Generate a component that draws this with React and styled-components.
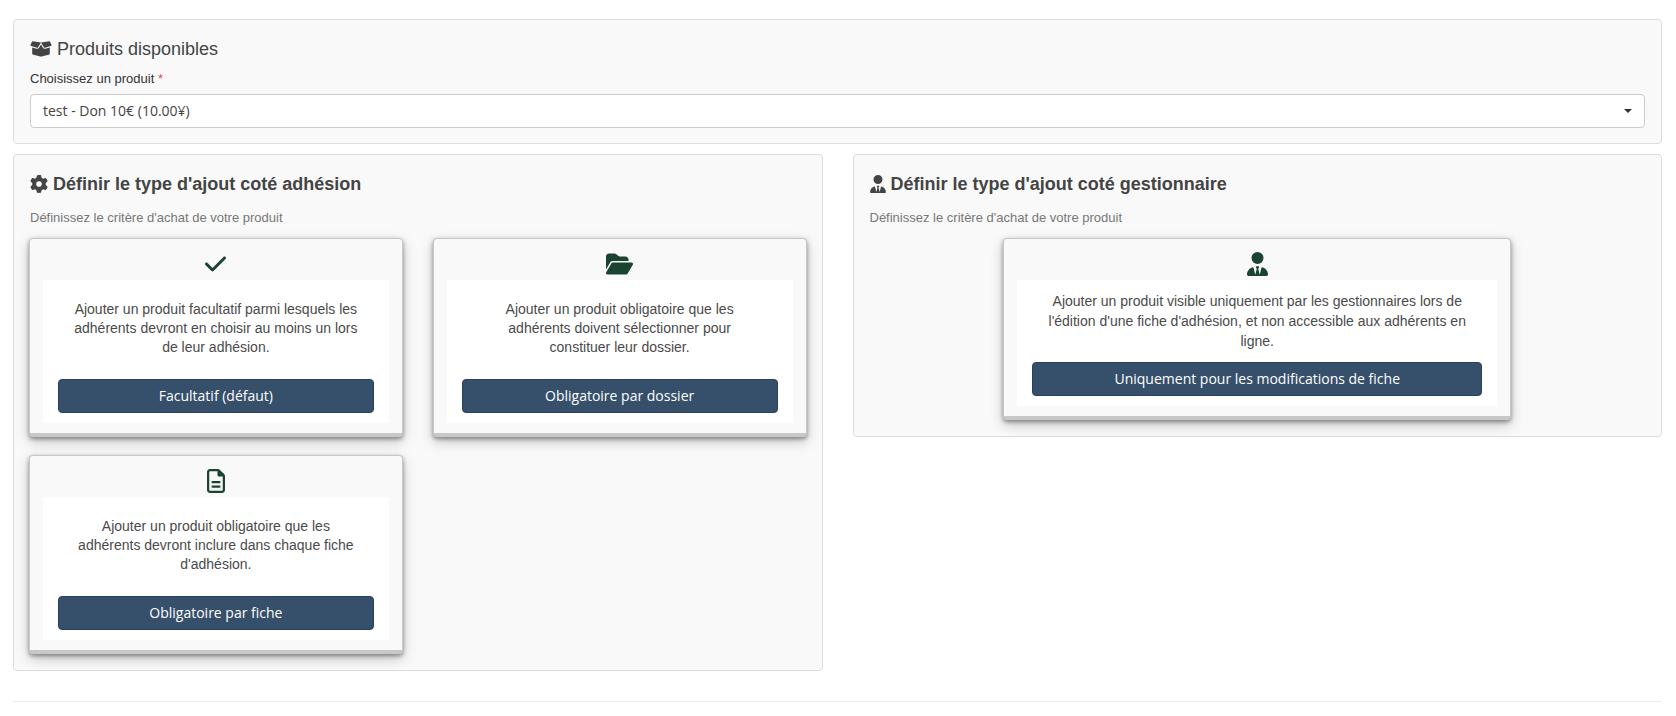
import { createGlobalStyle, styled } from "styled-components";
import {
  FaBoxOpen,
  FaCheck,
  FaFolderOpen,
  FaGear,
  FaRegFileLines,
  FaUserTie,
} from "react-icons/fa6";

const GlobalStyle = createGlobalStyle`
  * {
    box-sizing: border-box;
  }

  body {
    margin: 0;
    background-color: #fff;
    color: #444;
    font-family: "Liberation Sans", Arial, sans-serif;
    font-size: 14px;
  }
`;

const Page = styled.main`
  display: flex;
  flex-direction: column;
  gap: 10px;
  padding: 19px 14px 14px 13px;
`;

const Columns = styled.div`
  display: grid;
  grid-template-columns: 1fr 1fr;
  align-items: start;
  gap: 30px;
`;

const Panel = styled.section`
  padding: 16px 16px 15px;
  border: 1px solid #ddd;
  border-radius: 4px;
  background-color: #f9f9f9;
`;

const Title = styled.h2`
  display: flex;
  align-items: center;
  gap: 5px;
  margin: 0;
  font-size: 18px;
  line-height: 26px;
  font-weight: ${(props) => (props.$bold ? 700 : 400)};
`;

// glyphs are not square, the slot gives each one its own width
const IconSlot = styled.span`
  display: flex;
  width: ${(props) => props.$width}px;
  height: ${(props) => props.$height || 18}px;

  svg {
    width: 100%;
    height: 100%;
  }
`;

const Label = styled.label`
  display: block;
  margin: 7px 0 5px;
  color: #333;
  font-size: 13px;
  line-height: 20px;
`;

const Required = styled.span`
  color: #e74c3c;
`;

const SelectBox = styled.div`
  position: relative;

  &::after {
    content: "";
    position: absolute;
    top: 15px;
    right: 13px;
    border: 4px solid transparent;
    border-top-color: #333;
    border-bottom: 0;
    pointer-events: none;
  }
`;

const Select = styled.select`
  display: block;
  width: 100%;
  height: 34px;
  padding: 0 30px 2px 12px;
  border: 1px solid #ccc;
  border-radius: 4px;
  background-color: #fff;
  color: #444;
  font-family: "Open Sans", sans-serif;
  font-size: 14px;
  appearance: none;
`;

const Hint = styled.p`
  margin: 11px 0 10px;
  color: #777;
  font-size: 13px;
  line-height: 20px;
`;

const CardGrid = styled.div`
  display: grid;
  grid-template-columns: ${(props) =>
    props.$single ? "calc((100% + 30px) * 2 / 3 - 30px)" : "1fr 1fr"};
  justify-content: center;
  gap: 18px 30px;
  margin: 0 -1px 1px;
`;

const Card = styled.article`
  padding: 0 13px 10px;
  border: 1px solid #c8c8c8;
  border-bottom-width: 4px;
  border-radius: 4px;
  background-color: #f9f9f9;
  box-shadow: 0 2px 4px rgba(0, 0, 0, 0.4), 0 5px 14px rgba(0, 0, 0, 0.2);
`;

const CardIcon = styled.div`
  display: flex;
  justify-content: center;
  padding: 13px 0 4px;
  color: #1b4332;
`;

const CardBody = styled.div`
  padding: ${(props) => (props.$compact ? 11 : 20)}px 15px 10px;
  background-color: #fff;
`;

const Text = styled.p`
  margin: 0 0 ${(props) => (props.$compact ? 11 : 22)}px;
  padding: 0 15px;
  color: #4a4a4a;
  line-height: ${(props) => (props.$compact ? 20 : 19)}px;
  text-align: center;
`;

const Button = styled.button`
  display: block;
  width: 100%;
  height: 34px;
  padding: 0 12px 2px;
  border: 1px solid #2b4059;
  border-radius: 4px;
  background-color: #364f6b;
  color: #fff;
  font-family: "Open Sans", sans-serif;
  font-size: 14px;
  cursor: pointer;
`;

const Separator = styled.hr`
  width: 100%;
  margin: 20px 0 0;
  border: 0;
  border-top: 1px solid #eee;
`;

const memberTypes = [
  {
    icon: FaCheck,
    iconWidth: 21,
    text: "Ajouter un produit facultatif parmi lesquels les adhérents devront en choisir au moins un lors de leur adhésion.",
    action: "Facultatif (défaut)",
  },
  {
    icon: FaFolderOpen,
    iconWidth: 27,
    text: "Ajouter un produit obligatoire que les adhérents doivent sélectionner pour constituer leur dossier.",
    action: "Obligatoire par dossier",
  },
  {
    icon: FaRegFileLines,
    iconWidth: 18,
    text: "Ajouter un produit obligatoire que les adhérents devront inclure dans chaque fiche d'adhésion.",
    action: "Obligatoire par fiche",
  },
];

const managerType = {
  icon: FaUserTie,
  iconWidth: 21,
  text: "Ajouter un produit visible uniquement par les gestionnaires lors de l'édition d'une fiche d'adhésion, et non accessible aux adhérents en ligne.",
  action: "Uniquement pour les modifications de fiche",
};

const TypeCard = ({ item, compact }) => {
  const Icon = item.icon;
  return (
    <Card>
      <CardIcon>
        <IconSlot $width={item.iconWidth} $height={24}>
          <Icon />
        </IconSlot>
      </CardIcon>
      <CardBody $compact={compact}>
        <Text $compact={compact}>{item.text}</Text>
        <Button type="button">{item.action}</Button>
      </CardBody>
    </Card>
  );
};

const App = () => {
  return (
    <>
      <GlobalStyle />
      <Page>
        <Panel>
          <Title>
            <IconSlot $width={22}>
              <FaBoxOpen />
            </IconSlot>
            Produits disponibles
          </Title>
          <Label htmlFor="product">
            Choisissez un produit <Required>*</Required>
          </Label>
          <SelectBox>
            <Select id="product" required>
              <option>test - Don 10€ (10.00¥)</option>
            </Select>
          </SelectBox>
        </Panel>

        <Columns>
          <Panel>
            <Title $bold>
              <IconSlot $width={18}>
                <FaGear />
              </IconSlot>
              Définir le type d'ajout coté adhésion
            </Title>
            <Hint>Définissez le critère d'achat de votre produit</Hint>
            <CardGrid>
              {memberTypes.map((item) => (
                <TypeCard key={item.action} item={item} />
              ))}
            </CardGrid>
          </Panel>

          <Panel>
            <Title $bold>
              <IconSlot $width={16}>
                <FaUserTie />
              </IconSlot>
              Définir le type d'ajout coté gestionnaire
            </Title>
            <Hint>Définissez le critère d'achat de votre produit</Hint>
            <CardGrid $single>
              <TypeCard item={managerType} compact />
            </CardGrid>
          </Panel>
        </Columns>

        <Separator />
      </Page>
    </>
  );
};

export default App;
